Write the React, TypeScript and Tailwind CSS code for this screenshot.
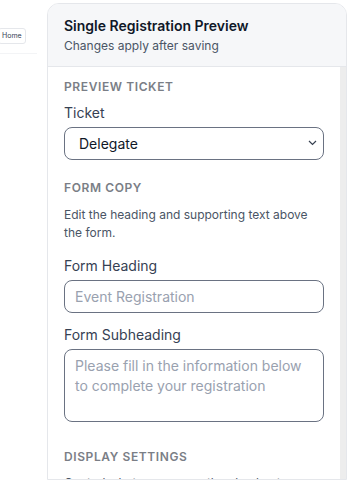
export default function App() {
    return (
        <div
            className="flex h-[480px] w-[360px] overflow-hidden bg-white"
            style={{ fontFamily: "Inter, 'Noto Sans', sans-serif" }}
        >
            {/* left strip */}
            <div className="w-[47px] shrink-0 pt-[20px]">
                <button className="-ml-[2px] h-[16px] rounded-[3px] border border-gray-200 bg-white px-[3px] text-[7px] leading-none text-gray-700">
                    Home
                </button>
                <div className="mt-[9px] h-px w-[37px] bg-gray-100" />
            </div>

            {/* panel */}
            <div className="mt-[3px] flex w-[300px] shrink-0 flex-col overflow-hidden rounded-t-xl border border-gray-200">
                <div className="border-b border-gray-200 bg-[#f6f7f9] px-4 py-3">
                    <h2 className="text-sm font-semibold leading-5 text-gray-900">Single Registration Preview</h2>
                    <p className="mt-0.5 text-xs leading-4 text-gray-600">Changes apply after saving</p>
                </div>
                <div className="flex flex-1">
                    <div className="flex-1 px-4 pt-3">
                        <h3 className="text-xs font-semibold uppercase leading-4 tracking-wider text-[#7a7e86]">Preview Ticket</h3>
                        <label className="mt-2 block text-sm leading-5 text-gray-700">Ticket</label>
                        <div className="relative mt-1">
                            <select className="h-[33px] w-full appearance-none rounded-lg border border-gray-500 bg-white pl-[14px] text-sm text-gray-900 outline-none">
                                <option>Delegate</option>
                            </select>
                            <svg className="pointer-events-none absolute right-[7px] top-[13px]" width="9" height="6" viewBox="0 0 9 6" fill="none">
                                <path d="M1 1l3.5 3.5L8 1" stroke="#374151" strokeWidth="1.2" />
                            </svg>
                        </div>

                        <h3 className="mt-[20px] text-xs font-semibold uppercase leading-4 tracking-wider text-[#7a7e86]">Form Copy</h3>
                        <p className="mt-[10px] text-xs leading-[18px] text-gray-600">Edit the heading and supporting text above the form.</p>

                        <label className="mt-[14px] block text-sm leading-5 text-gray-700">Form Heading</label>
                        <input
                            className="mt-[4px] h-[33px] w-full rounded-lg border border-gray-500 px-2.5 text-sm text-gray-900 outline-none placeholder:text-gray-400"
                            placeholder="Event Registration"
                        />

                        <label className="mt-3 block text-sm leading-5 text-gray-700">Form Subheading</label>
                        <textarea
                            className="mt-[4px] block h-[73px] w-full resize-none rounded-lg border border-gray-500 px-2.5 py-1.5 text-sm leading-5 text-gray-900 outline-none placeholder:text-gray-400"
                            placeholder="Please fill in the information below to complete your registration"
                        />

                        <h3 className="mt-[27px] text-xs font-semibold uppercase leading-4 tracking-wider text-[#7a7e86]">Display Settings</h3>
                        <p className="mt-[9px] text-xs leading-[18px] text-gray-600">Control what appears on the checkout page for attendees.</p>
                    </div>
                    <div className="w-[6px] shrink-0 bg-[#ededed]" />
                </div>
            </div>
        </div>
    )
}
